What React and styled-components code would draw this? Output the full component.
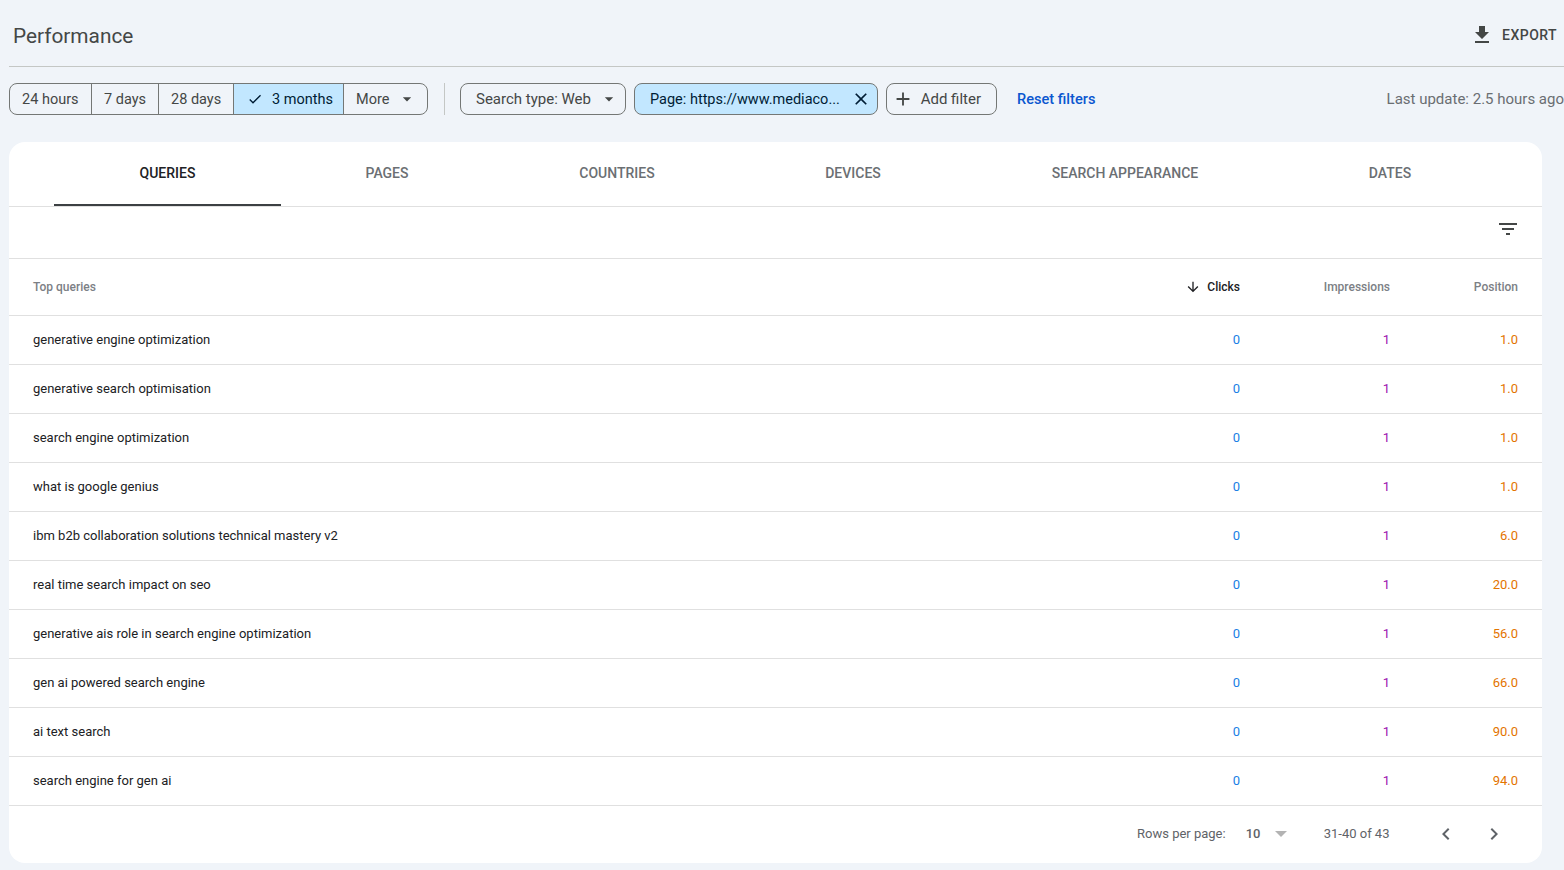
import React from "react";
import styled, { createGlobalStyle } from "styled-components";

const Global = createGlobalStyle`
  html, body { margin: 0; padding: 0; height: 100%; overflow: hidden; background: #f0f4f9; }
  * { box-sizing: border-box; }
`;

const Page = styled.div`
  width: 1564px;
  height: 870px;
  padding-left: 9px;
  overflow: hidden;
  font-family: Roboto, "Liberation Sans", sans-serif;
  color: #444746;
`;
const Header = styled.header`
  height: 67px;
  border-bottom: 1px solid #c4c7c5;
  display: flex;
  align-items: center;
  justify-content: space-between;
  padding: 4px 7px 0 4px;
`;
const Title = styled.h1`
  margin: 1px 0 0;
  font-size: 20.8px;
  font-weight: 400;
  line-height: 28px;
  color: #444746;
`;
const Export = styled.div`
  display: flex;
  align-items: center;
  gap: 8px;
  font-size: 14px;
  font-weight: 500;
  letter-spacing: 0.45px;
`;
const Toolbar = styled.div`
  display: flex;
  align-items: center;
  margin-top: 16px;
  height: 32px;
  white-space: nowrap;
`;
const Segments = styled.div`
  display: flex;
  height: 32px;
  border: 1px solid #747775;
  border-radius: 8px;
  overflow: hidden;
`;
const Segment = styled.div`
  display: flex;
  align-items: center;
  width: ${p => p.$w}px;
  padding-left: ${p => p.$pl || 12}px;
  font-size: 14.5px;
  color: ${p => (p.$on ? "#001d35" : "#444746")};
  background: ${p => (p.$on ? "#c2e7ff" : "transparent")};
  & + & { border-left: 1px solid #747775; }
`;
const CheckGap = styled.span`
  width: 9px;
`;
const CaretGap = styled.span`
  width: 8px;
`;
const Rule = styled.div`
  width: 1px;
  height: 32px;
  background: #c4c7c5;
  margin: 0 15px 0 16px;
`;
const Chip = styled.div`
  display: flex;
  align-items: center;
  justify-content: space-between;
  width: ${p => p.$w}px;
  height: 32px;
  margin-right: 8px;
  padding: ${p => p.$pad};
  border: 1px solid #747775;
  border-radius: 8px;
  font-size: ${p => p.$fs || 14.5}px;
  color: ${p => (p.$on ? "#001d35" : "#444746")};
  background: ${p => (p.$on ? "#c2e7ff" : "transparent")};
`;
const Reset = styled.span`
  margin-left: 12px;
  font-size: 14.6px;
  font-weight: 500;
  color: #0b57d0;
`;
const LastUpdate = styled.span`
  margin-left: auto;
  font-size: 15px;
  color: #6a6e72;
`;
const Card = styled.main`
  width: 1533px;
  height: 721px;
  margin-top: 27px;
  background: #fff;
  border-radius: 16px;
  overflow: hidden;
`;
const Tabs = styled.nav`
  display: flex;
  height: 65px;
  padding-left: 45px;
  border-bottom: 1px solid #e0e0e0;
`;
const Tab = styled.div`
  width: ${p => p.$w}px;
  height: 64px;
  display: flex;
  align-items: center;
  justify-content: center;
  font-size: 14px;
  font-weight: 500;
  color: ${p => (p.$on ? "#202124" : "#6b6f73")};
  border-bottom: 2px solid ${p => (p.$on ? "#3c4043" : "transparent")};
`;
const FilterBar = styled.div`
  height: 52px;
  display: flex;
  justify-content: flex-end;
  padding: 10px 22px 0 0;
  border-bottom: 1px solid #e0e0e0;
  color: #444746;
`;
const Row = styled.div`
  display: grid;
  grid-template-columns: 1fr 150px 128px;
  align-items: center;
  height: ${p => p.$h || 49}px;
  padding: 0 24px ${p => (p.$h ? 0 : 2)}px;
  border-bottom: 1px solid #e0e0e0;
  font-size: 13px;
`;
const Label = styled.div`
  display: flex;
  align-items: center;
  justify-content: flex-end;
  gap: 6px;
  font-size: 12px;
  font-weight: 500;
  color: ${p => (p.$on ? "#202124" : "#7c8085")};
`;
const Query = styled.div`
  color: #202124;
`;
const Metric = styled.div`
  text-align: right;
  color: ${p => p.$c};
`;
const Split = styled.div`
  display: flex;
  justify-content: space-between;
  align-items: center;
`;
const Footer = styled.footer`
  display: flex;
  align-items: center;
  height: 57px;
  padding: 0 0 2px 1128px;
  font-size: 13px;
  color: #5f6368;
`;
const RowsValue = styled.span`
  margin-left: 20px;
  width: 29px;
  font-weight: 500;
`;
const Caret = styled.span`
  width: 0;
  height: 0;
  border-left: 6px solid transparent;
  border-right: 6px solid transparent;
  border-top: 6px solid #b3b3b3;
  margin-right: 37px;
`;
const Pager = styled.span`
  display: flex;
  margin-left: 45px;
  gap: 24px;
  color: #5f6368;
`;

const Ico = ({ d, s = 24 }) => (
  <svg width={s} height={s} viewBox="0 0 24 24" fill="currentColor" aria-hidden="true">
    <path d={d} />
  </svg>
);
const P = {
  download: "M19 9h-4V3H9v6H5l7 7 7-7zM5 18v2h14v-2H5z",
  check: "M9 16.17L4.83 12l-1.42 1.41L9 19 21 7l-1.41-1.41z",
  close: "M19 6.41L17.59 5 12 10.59 6.41 5 5 6.41 10.59 12 5 17.59 6.41 19 12 13.41 17.59 19 19 17.59 13.41 12z",
  plus: "M19 13h-6v6h-2v-6H5v-2h6V5h2v6h6v2z",
  caret: "M7 10l5 5 5-5z",
  filter: "M10 18h4v-2h-4v2zM3 6v2h18V6H3zm3 7h12v-2H6v2z",
  down: "M20 12l-1.41-1.41L13 16.17V4h-2v12.17l-5.58-5.59L4 12l8 8 8-8z",
  left: "M15.41 7.41L14 6l-6 6 6 6 1.41-1.41L10.83 12z",
  right: "M10 6L8.59 7.41 13.17 12l-4.58 4.58L10 18l6-6z",
};

const rows = [
  ["generative engine optimization", "1.0"],
  ["generative search optimisation", "1.0"],
  ["search engine optimization", "1.0"],
  ["what is google genius", "1.0"],
  ["ibm b2b collaboration solutions technical mastery v2", "6.0"],
  ["real time search impact on seo", "20.0"],
  ["generative ais role in search engine optimization", "56.0"],
  ["gen ai powered search engine", "66.0"],
  ["ai text search", "90.0"],
  ["search engine for gen ai", "94.0"],
];
const tabs = [
  ["QUERIES", 227, true],
  ["PAGES", 212],
  ["COUNTRIES", 248],
  ["DEVICES", 224],
  ["SEARCH APPEARANCE", 320],
  ["DATES", 210],
];

export default function App() {
  return (
    <Page>
      <Global />
      <Header>
        <Title>Performance</Title>
        <Export>
          <Ico d={P.download} />
          EXPORT
        </Export>
      </Header>
      <Toolbar>
        <Segments>
          <Segment $w={81}>24 hours</Segment>
          <Segment $w={67}>7 days</Segment>
          <Segment $w={75}>28 days</Segment>
          <Segment $w={110} $on $pl={13}>
            <Ico d={P.check} s={16} />
            <CheckGap />3 months
          </Segment>
          <Segment $w={84}>
            More
            <CaretGap />
            <Ico d={P.caret} s={20} />
          </Segment>
        </Segments>
        <Rule />
        <Chip $w={166} $fs={15} $pad="0 6px 0 15px">
          Search type: Web
          <Ico d={P.caret} s={20} />
        </Chip>
        <Chip $w={244} $on $pad="0 6px 0 15px">
          Page: https://www.mediaco...
          <Ico d={P.close} s={20} />
        </Chip>
        <Chip $w={111} $fs={15} $pad="0 15px 0 5px">
          <Ico d={P.plus} s={22} />
          Add filter
        </Chip>
        <Reset>Reset filters</Reset>
        <LastUpdate>Last update: 2.5 hours ago</LastUpdate>
      </Toolbar>
      <Card>
        <Tabs>
          {tabs.map(([t, w, on]) => (
            <Tab key={t} $w={w} $on={on}>
              {t}
            </Tab>
          ))}
        </Tabs>
        <FilterBar>
          <Ico d={P.filter} />
        </FilterBar>
        <Row $h={57}>
          <Split>
            <Label>Top queries</Label>
            <Label $on>
              <Ico d={P.down} s={16} />
              Clicks
            </Label>
          </Split>
          <Label>Impressions</Label>
          <Label>Position</Label>
        </Row>
        {rows.map(([q, pos]) => (
          <Row key={q}>
            <Split>
              <Query>{q}</Query>
              <Metric $c="#1a80e5">0</Metric>
            </Split>
            <Metric $c="#9c11b0">1</Metric>
            <Metric $c="#e37400">{pos}</Metric>
          </Row>
        ))}
        <Footer>
          Rows per page:
          <RowsValue>10</RowsValue>
          <Caret />
          31-40 of 43
          <Pager>
            <Ico d={P.left} />
            <Ico d={P.right} />
          </Pager>
        </Footer>
      </Card>
    </Page>
  );
}
